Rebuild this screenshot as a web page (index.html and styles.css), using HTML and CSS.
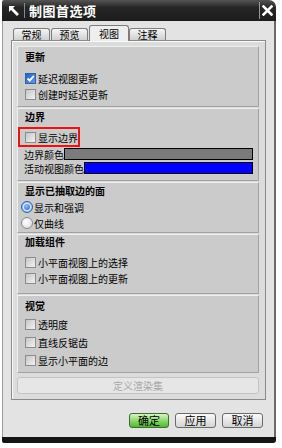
FILE: index.html
```html
<!DOCTYPE html>
<html>
<head>
<meta charset="utf-8">
<link rel="stylesheet" href="styles.css">
</head>
<body>
<div class="win">
  <div class="titlebar">
    <svg class="ticon" width="12" height="12" viewBox="0 0 12 12"><path d="M1 1 L7 1 L5 3 L11 9 L9 11 L3 5 L1 7 Z" fill="#fff"/></svg>
    <span class="tsep"></span>
    <span class="ttext">制图首选项</span>
    <span class="close"><svg width="11" height="11" viewBox="0 0 11 11"><path d="M1.5 1.5 L9.5 9.5 M9.5 1.5 L1.5 9.5" stroke="#fff" stroke-width="2.6" stroke-linecap="square"/></svg></span>
  </div>
  <div class="body">
    <div class="tabs">
      <div class="tab">常规</div>
      <div class="tab">预览</div>
      <div class="tab active">视图</div>
      <div class="tab">注释</div>
    </div>
    <div class="panel">
      <div class="group g1">
        <div class="gtitle">更新</div>
        <div class="rows">
          <div class="row"><span class="cb checked"><svg width="9" height="9" viewBox="0 0 9 9"><path d="M1.5 4.5 L3.7 6.7 L7.8 1.8" stroke="#fff" stroke-width="1.8" fill="none"/></svg></span>延迟视图更新</div>
          <div class="row"><span class="cb"></span>创建时延迟更新</div>
        </div>
      </div>
      <div class="group g2">
        <div class="gtitle">边界</div>
        <div class="redbox"><span class="cb"></span>显示边界</div>
        <div class="crow"><span class="clabel">边界颜色</span><span class="swatch gray"></span></div>
        <div class="crow"><span class="clabel">活动视图颜色</span><span class="swatch blue"></span></div>
      </div>
      <div class="group g3">
        <div class="gtitle">显示已抽取边的面</div>
        <div class="rrow"><span class="radio on"><span class="dot"></span></span>显示和强调</div>
        <div class="rrow"><span class="radio"></span>仅曲线</div>
      </div>
      <div class="group g4">
        <div class="gtitle">加载组件</div>
        <div class="rows">
          <div class="row"><span class="cb"></span>小平面视图上的选择</div>
          <div class="row"><span class="cb"></span>小平面视图上的更新</div>
        </div>
      </div>
      <div class="group g5">
        <div class="gtitle">视觉</div>
        <div class="rows">
          <div class="row"><span class="cb"></span>透明度</div>
          <div class="row"><span class="cb"></span>直线反锯齿</div>
          <div class="row"><span class="cb"></span>显示小平面的边</div>
        </div>
      </div>
      <div class="dbtn">定义渲染集</div>
    </div>
    <div class="buttons">
      <div class="btn ok">确定</div>
      <div class="btn">应用</div>
      <div class="btn">取消</div>
    </div>
  </div>
  <div class="bottombar"></div>
</div>
</body>
</html>
```
FILE: styles.css
```css
* { box-sizing: border-box; }
html, body { margin: 0; padding: 0; background: #fff; }
body {
  font-family: "Noto Sans CJK SC", "Noto Sans", sans-serif;
  font-size: 10px;
  color: #000;
}
.win {
  margin-left: 2px;
  width: 274px;
}
.titlebar {
  height: 21px;
  background: linear-gradient(#555 0%, #262626 35%, #1c1c1c 100%);
  border-radius: 2px 7px 0 0;
  display: flex;
  align-items: center;
  position: relative;
}
.ticon { margin-left: 6px; }
.tsep {
  width: 1px;
  height: 15px;
  background: #8a8a8a;
  margin-left: 4px;
}
.ttext {
  margin-left: 4px;
  color: #fff;
  font-weight: bold;
  font-size: 13px;
  line-height: 21px;
  letter-spacing: 0.5px;
}
.close {
  margin-left: auto;
  height: 17px;
  width: 16px;
  border-left: 1px solid #9a9a9a;
  display: flex;
  align-items: center;
  justify-content: center;
  margin-right: 1px;
}
.body {
  height: 416px;
  background: #e3e3e3;
  border-left: 1px solid #9c9c9c;
  border-right: 2px solid #6a6a6a;
  padding-top: 4px;
  padding-left: 8px;
}
.tabs {
  display: flex;
  align-items: flex-end;
  height: 15px;
  padding-left: 2px;
  position: relative;
  z-index: 2;
}
.tab {
  width: 37px;
  height: 12px;
  margin-right: 1px;
  border: 1px solid #7c7c7c;
  border-bottom: none;
  border-radius: 3px 3px 0 0;
  background: linear-gradient(#f6f6f6, #cfcfcf);
  text-align: center;
  line-height: 11px;
  font-size: 10px;
}
.tab.active {
  width: 40px;
  height: 16px;
  margin-right: 0;
  margin-bottom: -1px;
  background: #eeeeee;
  line-height: 15px;
}
.panel {
  width: 255px;
  height: 360px;
  border: 1px solid #8a8a8a;
  box-shadow: inset 1px 1px 0 #fafafa;
  background: #dcdcdc;
  padding: 5px 0 0 5px;
  display: flex;
  flex-direction: column;
  gap: 1px;
}
.group {
  width: 242px;
  background: #cbcbcb;
  border: 1px solid;
  border-color: #efefef #a2a2a2 #a2a2a2 #efefef;
  padding-left: 7px;
  padding-right: 5px;
}
.gtitle {
  font-weight: bold;
  line-height: 16px;
  height: 16px;
}
.rows { display: flex; flex-direction: column; }
.row {
  display: flex;
  align-items: center;
  height: 16px;
}
.cb {
  width: 11px;
  height: 11px;
  border: 1px solid #8c8c8c;
  background: linear-gradient(135deg, #c6c6c6, #f2f2f2);
  margin-right: 2px;
  display: inline-flex;
  align-items: center;
  justify-content: center;
  flex: none;
}
.cb.checked {
  background: linear-gradient(135deg, #1d5fcf, #5a9bf0);
  border-color: #3a5f9a;
}
.g1 { height: 61px; padding-top: 2px; }
.g1 .rows { margin-top: 5px; }
.g2 { height: 73px; padding-top: 0; }
.redbox {
  margin-top: 2px;
  margin-left: -7px;
  width: 62px;
  height: 20px;
  border: 2px solid #ee1111;
  padding-left: 5px;
  display: flex;
  align-items: center;
}
.crow {
  display: flex;
  align-items: center;
  height: 14px;
}
.clabel { white-space: nowrap; margin-left: -1px; }
.swatch {
  flex: 1;
  height: 12px;
  border: 1px solid #000;
}
.swatch.gray { background: #7b7b7b; }
.swatch.blue { background: #0000ff; }
.g3 { height: 51px; padding-top: 0; padding-left: 3px; }
.g3 .gtitle { padding-left: 4px; }
.rrow {
  display: flex;
  align-items: center;
  height: 16px;
}
.radio {
  width: 12px;
  height: 12px;
  border-radius: 50%;
  border: 1px solid #8a8a8a;
  background: radial-gradient(circle at 40% 40%, #ffffff, #d8d8d8);
  margin-right: 1px;
  display: inline-flex;
  align-items: center;
  justify-content: center;
  flex: none;
}
.radio.on {
  border-color: #2a5fb8;
  background: radial-gradient(circle at 50% 50%, #ffffff 40%, #7eb0f0 75%);
}
.radio .dot {
  width: 6px;
  height: 6px;
  border-radius: 50%;
  background: radial-gradient(circle at 40% 35%, #8fc0ff, #1c5ed8);
}
.g4 { height: 60px; padding-top: 0; }
.g4 .gtitle { line-height: 14px; height: 14px; }
.g4 .rows { margin-top: 5px; }
.g5 { height: 78px; padding-top: 2px; }
.g5 .rows { margin-top: 1px; }
.g5 .row { height: 18px; }
.dbtn {
  margin-top: 3px;
  width: 242px;
  height: 17px;
  border: 1px solid #c4c4c4;
  border-radius: 3px;
  background: #e6e6e6;
  color: #a6a6a6;
  text-align: center;
  line-height: 15px;
}
.buttons {
  margin-top: 13px;
  display: flex;
  justify-content: flex-end;
  gap: 6px;
  padding-right: 11px;
}
.btn {
  width: 41px;
  height: 15px;
  border: 1px solid #6a6a6a;
  border-radius: 3px;
  background: linear-gradient(#fafafa, #d4d4d4);
  text-align: center;
  line-height: 13px;
  font-size: 11px;
}
.btn.ok {
  width: 40px;
  background: linear-gradient(#d8f5c8, #7fd360 60%, #4fb832);
  border-color: #3f6a30;
}
.bottombar {
  height: 6px;
  background: #151515;
  border-radius: 0 0 3px 2px;
}
```
